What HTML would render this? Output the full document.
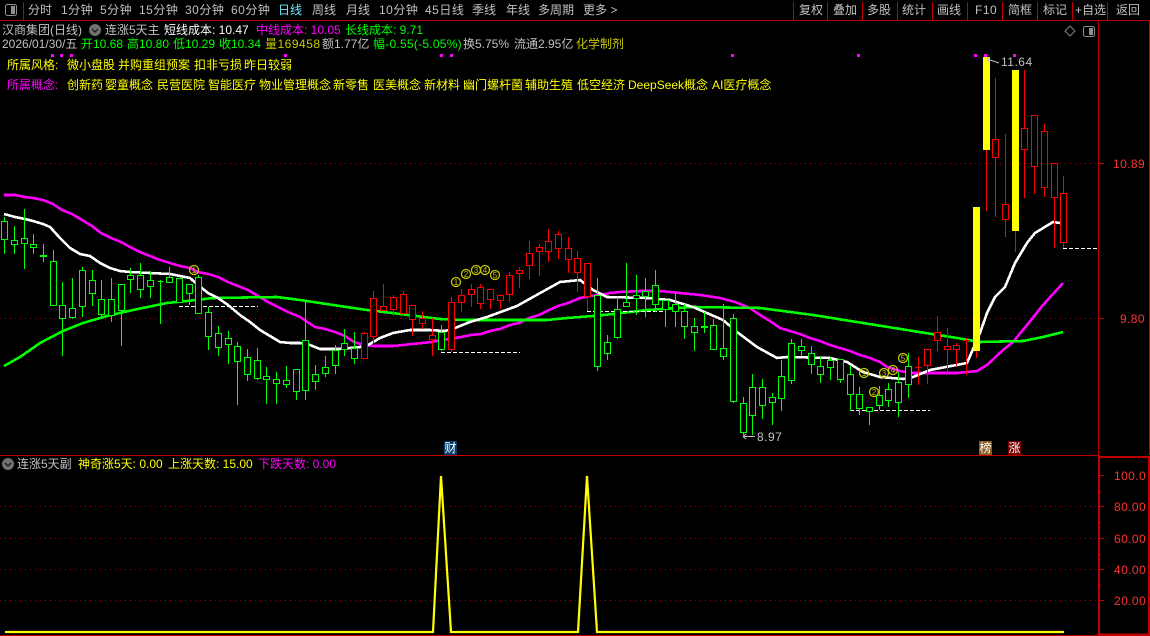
<!DOCTYPE html>
<html><head><meta charset="utf-8"><style>
html,body{margin:0;padding:0;background:#000}
#p{position:relative;width:1150px;height:636px;background:#000;overflow:hidden;font-family:"Liberation Sans","WenQuanYi Zen Hei","Noto Sans CJK SC",sans-serif;font-size:12px;line-height:14px;color:#c0c0c0}
#p span{position:absolute;white-space:nowrap}
svg{position:absolute;left:0;top:0}
.y{color:#ff0}.m{color:#f0f}.g{color:#0f0}.w{color:#fff}.r{color:#ff3232;letter-spacing:.4px}.d{letter-spacing:.5px}
.b{width:13px;height:14px;color:#fff;text-align:center}
</style></head><body><div id="p">
<svg width="1150" height="636" viewBox="0 0 1150 636" fill="none">
<g stroke="#c00000" shape-rendering="crispEdges">
<path d="M0 20.5H1150M0 455.5H1098M0 635.5H1150M1098.5 21V635M1149.5 21V455M23.5 2V20M793.5 2V20M827.5 2V20M862.5 2V20M897.5 2V20M932.5 2V20M967.5 2V20M1002.5 2V20M1037.5 2V20M1072.5 2V20M1107.5 2V20"/>
<path d="M1098 457H1150M1099 456V635M1149 456V635M1098 634.5H1150" stroke-width="2"/>
<path d="M1099 163.5H1104M1099 318.5H1104M1099 475.5H1104M1099 506.5H1104M1099 538.5H1104M1099 569.5H1104M1099 600.5H1104M1099 491.5H1101M1099 522.5H1101M1099 554.5H1101M1099 585.5H1101"/>
<path d="M0 163.5H1098M0 318.5H1098M0 506.5H1098M0 538.5H1098M0 569.5H1098M0 600.5H1098" stroke="#a00000" stroke-dasharray="1 4"/>
</g>
<g stroke-width="2.6" shape-rendering="crispEdges">
<polyline stroke="#f0f" points="4,195 15,195 25,197 33,198 43,200 53,204 62,210 72,214 82,220 92,226 101,233 111,238 121,242 130,247 140,252 150,256 160,260 170,263 180,266 190,268 198,272 208,274 218,277 228,282 238,286 248,290 258,296 268,302 278,307 288,312 300,317 315,327 325,329 335,332 345,336 354,342 364,345 374,346 384,346 393,346 403,345 412,344 422,343 432,342 441,340 451,339 461,337 471,335 481,334 490,331 500,329 510,325 519,323 529,318 539,315 549,310 558,306 568,303 580,298 590,296 600,295 610,293 620,292 640,291 660,291 680,293 700,295 720,298 735,302 750,308 760,315 770,321 780,328 790,331 800,334 810,338 820,341 830,345 840,348 850,351 860,355 870,358 880,362 887,367 900,371 913,373 957,373 977,371 987,365 1003,350 1013,342 1027,325 1043,305 1063,283"/>
<polyline stroke="#0f0" points="4,366 20,357 40,343 63,331 83,323 107,316 133,310 167,303 187,301 213,298 277,297 300,300 333,305 367,310 400,314 440,319 467,320 547,320 567,318 593,316 613,314 647,310 693,307 760,308 813,315 863,323 913,331 957,338 980,342 1023,341 1043,337 1063,332"/>
<polyline stroke="#fff" points="4,214 15,217 25,219 33,221 43,224 50,227 60,238 70,248 80,254 90,256 100,263 110,268 120,271 130,272 150,273 170,274 190,278 198,285 208,293 218,298 228,305 240,315 250,322 260,330 270,336 280,342 290,343 300,343 310,345 320,349 340,349 360,347 368,345 380,338 393,333 410,330 430,330 445,331 455,328 470,322 487,317 517,306 533,297 560,282 580,280 593,290 607,297 647,298 670,300 693,307 723,320 737,332 757,347 777,358 787,357 830,358 847,362 863,372 880,377 903,379 913,377 930,370 967,363 980,333 987,313 995,297 1005,287 1015,263 1027,243 1035,233 1053,222 1060,223"/>
</g>
<path shape-rendering="crispEdges" stroke="#fff" stroke-dasharray="4 2" d="M179 306.5H258M441 352.5H520M587 311.5H666M850 410.5H930M1063 248.5H1098"/>
<g shape-rendering="crispEdges" stroke="#0f0" fill="#000">
<path d="M4.5 217V254M14.5 226V254M24.5 209V269M33.5 234V254M43.5 244V262M53.5 250V305M62.5 282V356M72.5 278V319M82.5 267V317M92.5 270V306M101.5 280V317M111.5 278V322M121.5 284V346M130.5 268V293M140.5 263V298M150.5 271V298M160.5 280V324M169.5 267V283M179.5 278V302M189.5 284V305M198.5 275V313M208.5 307V350M218.5 326V356M228.5 331V364M237.5 342V405M247.5 349V381M257.5 348V380M266.5 367V404M276.5 372V404M286.5 366V388M296.5 369V400M305.5 300V400M315.5 365V390M325.5 356V377M335.5 345V374M344.5 329V356M354.5 332V364M441.5 325V351M597.5 278V371M607.5 335V360M617.5 297V339M626.5 263V306M636.5 275V315M645.5 278V317M655.5 270V312M665.5 300V327M675.5 293V327M684.5 304V339M694.5 318V351M704.5 312V333M713.5 319V350M723.5 304V360M733.5 314V403M743.5 397V435M752.5 374V435M762.5 379V419M772.5 393V425M781.5 360V411M791.5 339V384M801.5 339V356M811.5 346V374M820.5 357V383M830.5 357V380M840.5 359V383M850.5 365V411M859.5 387V415M869.5 407V425M879.5 386V410M888.5 383V407M898.5 372V417M908.5 353V398"/>
<path d="M1.5 221.5h6v18h-6zM11.5 240.5h6v4h-6zM21.5 238.5h6v5h-6zM30.5 244.5h6v3h-6zM40.5 255.5h6v1h-6zM50.5 261.5h6v44h-6zM59.5 305.5h6v13h-6zM69.5 308.5h6v9h-6zM79.5 270.5h6v36h-6zM89.5 280.5h6v13h-6zM98.5 299.5h6v15h-6zM108.5 299.5h6v16h-6zM118.5 284.5h6v26h-6zM127.5 275.5h6v4h-6zM137.5 275.5h6v14h-6zM147.5 280.5h6v6h-6zM157.5 281.5h6v0h-6zM166.5 277.5h6v5h-6zM176.5 278.5h6v24h-6zM186.5 284.5h6v9h-6zM195.5 277.5h6v36h-6zM205.5 312.5h6v24h-6zM215.5 333.5h6v14h-6zM225.5 338.5h6v6h-6zM234.5 346.5h6v15h-6zM244.5 357.5h6v17h-6zM254.5 360.5h6v18h-6zM263.5 376.5h6v3h-6zM273.5 379.5h6v4h-6zM283.5 380.5h6v4h-6zM293.5 369.5h6v22h-6zM302.5 340.5h6v50h-6zM312.5 374.5h6v7h-6zM322.5 367.5h6v6h-6zM332.5 350.5h6v15h-6zM341.5 343.5h6v6h-6zM351.5 348.5h6v10h-6zM438.5 332.5h6v17h-6zM594.5 295.5h6v71h-6zM604.5 342.5h6v11h-6zM614.5 309.5h6v28h-6zM623.5 302.5h6v4h-6zM633.5 295.5h6v3h-6zM642.5 291.5h6v5h-6zM652.5 285.5h6v19h-6zM662.5 300.5h6v9h-6zM672.5 304.5h6v7h-6zM681.5 311.5h6v15h-6zM691.5 326.5h6v6h-6zM701.5 326.5h6v1h-6zM710.5 325.5h6v24h-6zM720.5 348.5h6v8h-6zM730.5 318.5h6v83h-6zM740.5 403.5h6v29h-6zM749.5 387.5h6v28h-6zM759.5 387.5h6v18h-6zM769.5 397.5h6v5h-6zM778.5 376.5h6v22h-6zM788.5 343.5h6v37h-6zM798.5 346.5h6v4h-6zM808.5 353.5h6v11h-6zM817.5 366.5h6v8h-6zM827.5 360.5h6v7h-6zM837.5 359.5h6v20h-6zM847.5 374.5h6v20h-6zM856.5 394.5h6v14h-6zM866.5 407.5h6v4h-6zM876.5 395.5h6v10h-6zM885.5 389.5h6v11h-6zM895.5 382.5h6v20h-6zM905.5 366.5h6v18h-6z"/>
</g>
<g shape-rendering="crispEdges" stroke="#f00" fill="#000">
<path d="M364.5 332V358M373.5 291V346M383.5 284V310M393.5 295V316M403.5 291V315M412.5 305V336M422.5 311V329M432.5 318V356M451.5 297V352M461.5 289V312M471.5 284V307M480.5 284V309M490.5 289V309M500.5 294V309M509.5 272V302M519.5 267V288M529.5 241V279M539.5 244V276M548.5 229V262M558.5 231V259M568.5 237V273M577.5 251V292M587.5 263V311M918.5 357V385M927.5 349V384M937.5 316V351M947.5 328V371M956.5 343V366M966.5 338V375M976.5 351V358M986.5 150V211M995.5 78V217M1005.5 134V237M1015.5 231V252M1024.5 70V198M1034.5 115V194M1044.5 124V197M1054.5 163V248M1063.5 176V248"/>
<path d="M361.5 333.5h6v25h-6zM370.5 298.5h6v38h-6zM380.5 306.5h6v4h-6zM390.5 297.5h6v12h-6zM400.5 294.5h6v19h-6zM409.5 305.5h6v14h-6zM419.5 318.5h6v5h-6zM429.5 335.5h6v4h-6zM448.5 302.5h6v47h-6zM458.5 295.5h6v7h-6zM468.5 289.5h6v5h-6zM477.5 287.5h6v16h-6zM487.5 289.5h6v10h-6zM497.5 295.5h6v5h-6zM506.5 275.5h6v19h-6zM516.5 270.5h6v3h-6zM526.5 253.5h6v12h-6zM536.5 247.5h6v4h-6zM545.5 241.5h6v10h-6zM555.5 234.5h6v14h-6zM565.5 248.5h6v11h-6zM574.5 258.5h6v14h-6zM584.5 263.5h6v33h-6zM915.5 367.5h6v0h-6zM924.5 349.5h6v16h-6zM934.5 332.5h6v8h-6zM944.5 346.5h6v3h-6zM953.5 345.5h6v4h-6zM963.5 340.5h6v0h-6zM992.5 139.5h6v18h-6zM1002.5 204.5h6v15h-6zM1021.5 128.5h6v21h-6zM1031.5 115.5h6v51h-6zM1041.5 131.5h6v56h-6zM1051.5 163.5h6v34h-6zM1060.5 193.5h6v49h-6z"/>
</g>
<g fill="#ff0" shape-rendering="crispEdges">
<rect x="973" y="207" width="7" height="144"/><rect x="983" y="57" width="7" height="93"/><rect x="1012" y="70" width="7" height="161"/>
</g>
<g fill="#f0f" shape-rendering="crispEdges">
<path d="M51 54h3v3h-3zM60 54h3v3h-3zM70 54h3v3h-3zM284 54h3v3h-3zM440 54h3v3h-3zM450 54h3v3h-3zM731 54h3v3h-3zM857 54h3v3h-3zM974 54h3v3h-3zM984 54h3v3h-3zM1013 54h3v3h-3z"/>
</g>
<g stroke="#c8c800" stroke-width="1.3">
<circle cx="194" cy="270" r="4.5"/><circle cx="456" cy="282" r="4.5"/><circle cx="466" cy="274" r="4.5"/><circle cx="476" cy="270" r="4.5"/><circle cx="485" cy="270" r="4.5"/><circle cx="495" cy="275" r="4.5"/><circle cx="864" cy="373" r="4.5"/><circle cx="874" cy="392" r="4.5"/><circle cx="884" cy="373" r="4.5"/><circle cx="893" cy="370" r="4.5"/><circle cx="903" cy="358" r="4.5"/>
</g>
<g fill="#c8c800" font-family="Liberation Sans" font-size="8" text-anchor="middle">
<text x="194" y="273">1</text><text x="456" y="285">1</text><text x="466" y="277">2</text><text x="476" y="273">3</text><text x="485" y="273">4</text><text x="495" y="278">5</text><text x="864" y="376">1</text><text x="874" y="395">2</text><text x="884" y="376">3</text><text x="893" y="373">4</text><text x="903" y="361">5</text>
</g>
<path stroke="#ff0" stroke-width="2.2" d="M5 632H433L441 476L451 632H578L587 476L597 632H1064"/>
<g stroke="#c0c0c0">
<path d="M987 59L999 63M987 59l3-2M987 59l2 3"/>
<path d="M743 436.5H755M743 436.5l3-2.5M743 436.5l3 2.5"/>
</g>
<circle cx="95" cy="30" r="6" fill="#707070"/><path d="M92 29l3 3 3-3" stroke="#111" stroke-width="1.2"/>
<circle cx="8" cy="464" r="6" fill="#707070"/><path d="M5 463l3 3 3-3" stroke="#111" stroke-width="1.2"/>
<rect x="5.5" y="4.5" width="11" height="11" rx="2" stroke="#909090"/><rect x="11" y="6" width="4" height="8" fill="#909090"/>
<path d="M1070 26l5 5-5 5-5-5z" stroke="#808080"/>
<rect x="1083.5" y="26.5" width="11" height="10" rx="2" stroke="#909090"/><rect x="1089" y="28" width="4" height="7" fill="#909090"/>
</svg>
<span style="left:28px;top:3px">分时</span><span class="d" style="left:61px;top:3px">1分钟</span><span class="d" style="left:100px;top:3px">5分钟</span><span class="d" style="left:139px;top:3px">15分钟</span><span class="d" style="left:185px;top:3px">30分钟</span><span class="d" style="left:231px;top:3px">60分钟</span><span style="left:278px;top:3px;color:#6fe8ff">日线</span><span style="left:312px;top:3px">周线</span><span style="left:346px;top:3px">月线</span><span class="d" style="left:379px;top:3px">10分钟</span><span class="d" style="left:425px;top:3px">45日线</span><span style="left:472px;top:3px">季线</span><span style="left:506px;top:3px">年线</span><span style="left:538px;top:3px">多周期</span><span style="left:583px;top:3px">更多 &gt;</span>
<span style="left:799px;top:3px">复权</span><span style="left:833px;top:3px">叠加</span><span style="left:867px;top:3px">多股</span><span style="left:902px;top:3px">统计</span><span style="left:937px;top:3px">画线</span><span class="d" style="left:975px;top:3px">F10</span><span style="left:1008px;top:3px">简框</span><span style="left:1043px;top:3px">标记</span><span style="left:1075px;top:3px">+自选</span><span style="left:1116px;top:3px">返回</span>
<span style="left:2px;top:23px">汉商集团(日线)</span><span style="left:105px;top:23px">连涨5天主</span><span class="w" style="left:164px;top:23px">短线成本: 10.47</span><span class="m" style="left:256px;top:23px">中线成本: 10.05</span><span class="g" style="left:345px;top:23px">长线成本: 9.71</span>
<span style="left:2px;top:37px">2026/01/30/五</span><span class="g" style="left:81px;top:37px">开10.68</span><span class="g" style="left:127px;top:37px">高10.80</span><span class="g" style="left:173px;top:37px">低10.29</span><span class="g" style="left:219px;top:37px">收10.34</span><span class="d" style="left:265px;top:37px;color:#c8c800">量169458</span><span style="left:322px;top:37px">额1.77亿</span><span class="g" style="left:373px;top:37px;letter-spacing:.25px">幅-0.55(-5.05%)</span><span style="left:463px;top:37px">换5.75%</span><span style="left:514px;top:37px">流通2.95亿</span><span style="left:576px;top:37px;color:#c8c800">化学制剂</span>
<span class="y" style="left:7px;top:58px">所属风格:</span><span class="y" style="left:67px;top:58px">微小盘股</span><span class="y" style="left:118px;top:58px">并购重组预案</span><span class="y" style="left:194px;top:58px">扣非亏损</span><span class="y" style="left:244px;top:58px">昨日较弱</span>
<span class="m" style="left:7px;top:78px">所属概念:</span><span class="y" style="left:67px;top:78px">创新药</span><span class="y" style="left:105px;top:78px">婴童概念</span><span class="y" style="left:157px;top:78px">民营医院</span><span class="y" style="left:208px;top:78px">智能医疗</span><span class="y" style="left:259px;top:78px">物业管理概念</span><span class="y" style="left:333px;top:78px">新零售</span><span class="y" style="left:373px;top:78px">医美概念</span><span class="y" style="left:424px;top:78px">新材料</span><span class="y" style="left:463px;top:78px">幽门螺杆菌</span><span class="y" style="left:525px;top:78px">辅助生殖</span><span class="y" style="left:577px;top:78px">低空经济</span><span class="y" style="left:628px;top:78px">DeepSeek概念</span><span class="y" style="left:712px;top:78px">AI医疗概念</span>
<span class="d" style="left:1001px;top:55px">11.64</span><span class="d" style="left:757px;top:430px">8.97</span>
<span class="r" style="left:1113px;top:157px">10.89</span><span class="r" style="left:1120px;top:312px">9.80</span>
<span class="r" style="left:1114px;top:469px">100.0</span><span class="r" style="left:1114px;top:500px">80.00</span><span class="r" style="left:1114px;top:532px">60.00</span><span class="r" style="left:1114px;top:563px">40.00</span><span class="r" style="left:1114px;top:594px">20.00</span>
<span class="b" style="left:444px;top:441px;background:#003e6e">财</span><span class="b" style="left:979px;top:441px;background:#8b5a1e">榜</span><span class="b" style="left:1008px;top:441px;background:#7a0000">涨</span>
<span style="left:17px;top:457px">连涨5天副</span><span class="y" style="left:78px;top:457px">神奇涨5天: 0.00</span><span class="y" style="left:168px;top:457px">上涨天数: 15.00</span><span class="m" style="left:258px;top:457px">下跌天数: 0.00</span>
</div></body></html>
